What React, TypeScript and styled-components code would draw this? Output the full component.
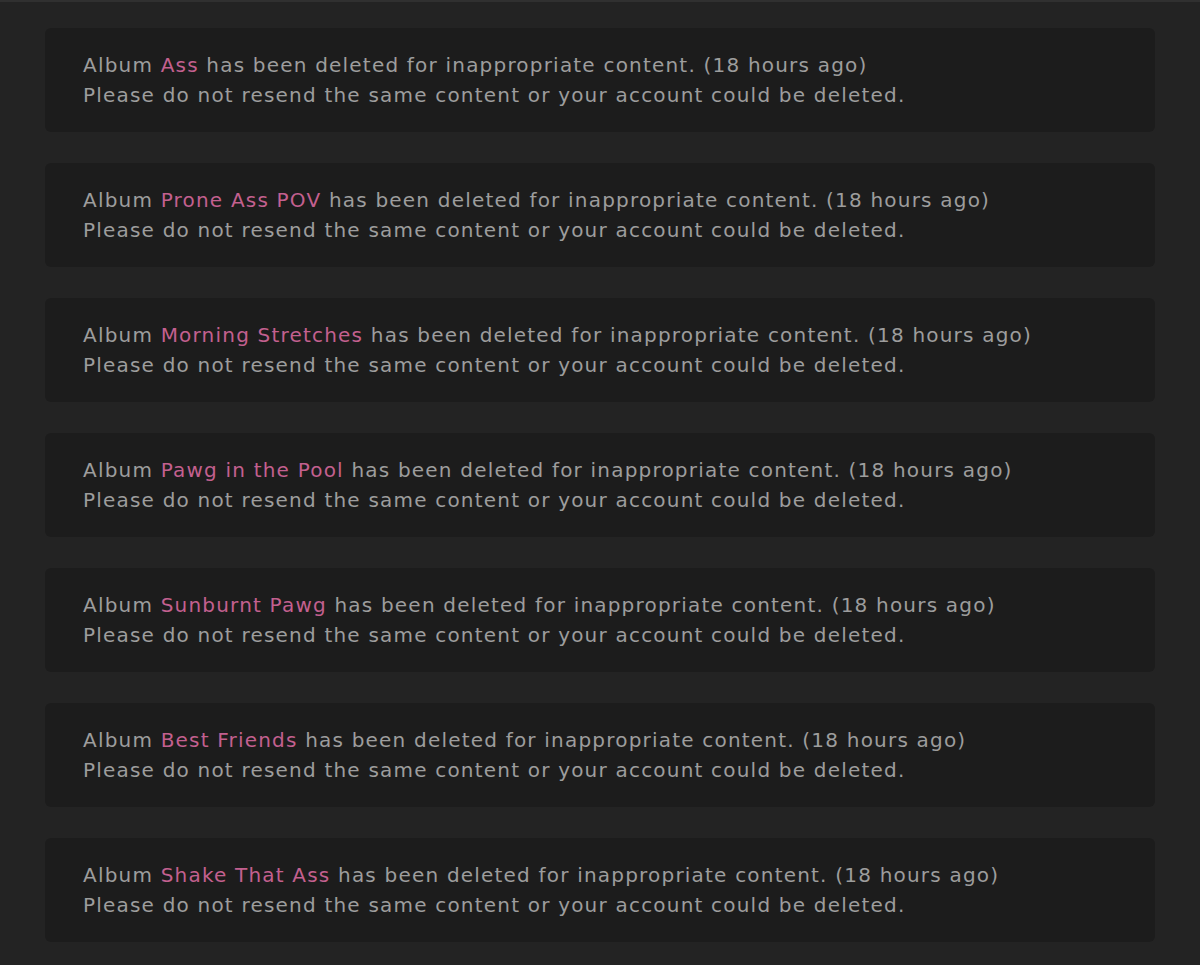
import React from "react";
import styled, { createGlobalStyle } from "styled-components";

const Global = createGlobalStyle`
  html, body { margin: 0; padding: 0; background: #232323; }
  body { font-family: "DejaVu Sans", "Noto Sans", sans-serif; }
`;

const Page = styled.div`
  min-height: 965px;
  box-sizing: border-box;
  border-top: 2px solid #303030;
  padding: 26px 45px 20px;
  display: flex;
  flex-direction: column;
  gap: 31px;
`;

const Card = styled.div`
  background: #1c1c1c;
  border-radius: 6px;
  height: 104px;
  box-sizing: border-box;
  padding: 22px 38px;
  color: #9d9d9d;
  font-size: 20px;
  letter-spacing: 1.2px;
  line-height: 30px;
`;

const Line = styled.div`
  white-space: nowrap;
`;

const AlbumName = styled.span`
  color: #c3608f;
`;

const albums = [
  "Ass",
  "Prone Ass POV",
  "Morning Stretches",
  "Pawg in the Pool",
  "Sunburnt Pawg",
  "Best Friends",
  "Shake That Ass",
];

export default function App() {
  return (
    <>
      <Global />
      <Page>
        {albums.map((name) => (
          <Card key={name}>
            <Line>
              Album <AlbumName>{name}</AlbumName> has been deleted for inappropriate content. (18 hours ago)
            </Line>
            <Line>Please do not resend the same content or your account could be deleted.</Line>
          </Card>
        ))}
      </Page>
    </>
  );
}
